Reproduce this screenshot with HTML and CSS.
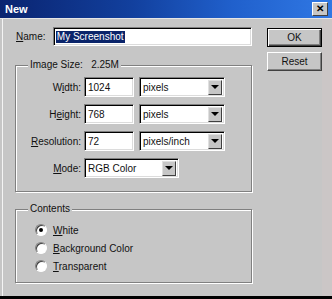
FILE: index.html
```html
<!DOCTYPE html>
<html>
<head>
<meta charset="utf-8">
<link rel="stylesheet" href="styles.css">
</head>
<body>
<div class="window">
  <div class="titlebar">
    <span class="title">New</span>
    <span class="close">&#x2715;</span>
  </div>
  <div class="body">
    <div class="left">
      <div class="name-row">
        <span class="label name-label"><u>N</u>ame:</span>
        <div class="field name-field"><span class="sel">My Screenshot</span></div>
      </div>
      <div class="group size-group">
        <span class="group-title">Image Size:&nbsp;&nbsp; 2.25M</span>
        <div class="rows">
          <div class="row">
            <span class="label row-label">W<u>i</u>dth:</span>
            <div class="field num">1024</div>
            <div class="field select unit"><span class="val">pixels</span><span class="drop"><span class="tri"></span></span></div>
          </div>
          <div class="row">
            <span class="label row-label">H<u>e</u>ight:</span>
            <div class="field num">768</div>
            <div class="field select unit"><span class="val">pixels</span><span class="drop"><span class="tri"></span></span></div>
          </div>
          <div class="row">
            <span class="label row-label"><u>R</u>esolution:</span>
            <div class="field num">72</div>
            <div class="field select unit"><span class="val">pixels/inch</span><span class="drop"><span class="tri"></span></span></div>
          </div>
          <div class="row">
            <span class="label row-label"><u>M</u>ode:</span>
            <div class="field select mode"><span class="val">RGB Color</span><span class="drop"><span class="tri"></span></span></div>
          </div>
        </div>
      </div>
      <div class="group contents-group">
        <span class="group-title">Contents</span>
        <div class="radios">
          <div class="radio-row"><span class="radio checked"></span><span class="label"><u>W</u>hite</span></div>
          <div class="radio-row"><span class="radio"></span><span class="label"><u>B</u>ackground Color</span></div>
          <div class="radio-row"><span class="radio"></span><span class="label"><u>T</u>ransparent</span></div>
        </div>
      </div>
    </div>
    <div class="buttons">
      <div class="btn default">OK</div>
      <div class="btn">Reset</div>
    </div>
  </div>
  <div class="bottombar"></div>
</div>
</body>
</html>
```

FILE: styles.css
```css
html, body {
  margin: 0;
  padding: 0;
  background: #c6c6c6;
}
.window {
  width: 332px;
  height: 299px;
  background: #c6c6c6;
  font-family: "Liberation Sans", Arial, sans-serif;
  font-size: 10px;
  color: #111;
  display: flex;
  flex-direction: column;
  overflow: hidden;
}
.titlebar {
  height: 18px;
  flex: none;
  background: linear-gradient(90deg, #0a2470 0%, #12409e 40%, #2060cc 70%, #3078e4 100%);
  display: flex;
  align-items: center;
  justify-content: space-between;
  padding: 0 4px 0 5px;
  border-bottom: 1px solid #e6e6e6;
}
.title {
  color: #fff;
  font-weight: bold;
  font-size: 11px;
}
.close {
  width: 16px;
  height: 14px;
  box-sizing: border-box;
  background: #c6c6c6;
  border: 1px solid;
  border-color: #fff #404040 #404040 #fff;
  font-size: 10px;
  font-weight: bold;
  line-height: 12px;
  text-align: center;
  color: #000;
}
.body {
  flex: 1;
  display: flex;
  padding: 8px 0 0 15px;
  box-shadow: inset 2px 0 0 #c6c6c6, inset 3px 0 0 #f4f4f4, inset -10px 0 0 #cbc6c6;
}
.left {
  width: 237px;
  display: flex;
  flex-direction: column;
}
.label {
  white-space: nowrap;
}
.name-row {
  display: flex;
  align-items: center;
  height: 19px;
}
.name-label {
  width: 37px;
  padding-left: 1px;
}
.field {
  box-sizing: border-box;
  background: #fff;
  border-top: 1px solid #808080;
  border-left: 1px solid #808080;
  border-right: 1px solid #fff;
  border-bottom: 1px solid #fff;
  box-shadow: inset 1px 1px 0 #000, inset -1px -1px 0 #dcdcdc;
  height: 20px;
  display: flex;
  align-items: center;
  padding-left: 3px;
  white-space: nowrap;
}
.name-field {
  width: 200px;
  height: 19px;
  padding-left: 2px;
}
.sel {
  background: #0a246a;
  color: #fff;
  padding: 0 1px;
  line-height: 12px;
}
.group {
  position: relative;
  border: 1px solid #808080;
  box-shadow: inset 1px 1px 0 #fff, 1px 1px 0 #fff;
  box-sizing: border-box;
}
.group-title {
  position: absolute;
  top: -7px;
  left: 12px;
  background: #c6c6c6;
  padding: 0 2px;
  line-height: 12px;
  white-space: nowrap;
}
.size-group {
  margin-top: 19px;
  height: 127px;
  padding: 11px 0 0 1px;
}
.rows {
  display: flex;
  flex-direction: column;
  gap: 7px;
}
.row {
  display: flex;
  align-items: center;
  height: 20px;
}
.row-label {
  width: 64px;
  text-align: right;
  margin-right: 3px;
}
.num {
  width: 50px;
  margin-right: 5px;
}
.select {
  justify-content: space-between;
  padding-right: 2px;
}
.unit {
  width: 86px;
}
.mode {
  width: 95px;
}
.drop {
  width: 14px;
  height: 15px;
  box-sizing: border-box;
  background: #c6c6c6;
  border: 1px solid;
  border-color: #e0e0e0 #404040 #404040 #e0e0e0;
  display: flex;
  align-items: center;
  justify-content: center;
}
.tri {
  width: 0;
  height: 0;
  border-left: 4px solid transparent;
  border-right: 4px solid transparent;
  border-top: 4px solid #000;
}
.contents-group {
  margin-top: 17px;
  height: 74px;
  padding: 14px 0 0 19px;
}
.radios {
  display: flex;
  flex-direction: column;
  gap: 6px;
}
.radio-row {
  display: flex;
  align-items: center;
  height: 12px;
  gap: 6px;
}
.radio {
  width: 12px;
  height: 12px;
  box-sizing: border-box;
  border-radius: 50%;
  background: #fff;
  border: 1px solid;
  border-color: #808080 #fff #fff #808080;
  box-shadow: inset 1px 1px 0 #404040;
  display: flex;
  align-items: center;
  justify-content: center;
}
.radio.checked::after {
  content: "";
  width: 4px;
  height: 4px;
  border-radius: 50%;
  background: #000;
}
.buttons {
  display: flex;
  flex-direction: column;
  gap: 5px;
  margin-left: 15px;
  padding-top: 1px;
}
.btn {
  width: 55px;
  height: 19px;
  box-sizing: border-box;
  border: 1px solid;
  border-color: #fff #404040 #404040 #fff;
  box-shadow: inset -1px -1px 0 #808080;
  display: flex;
  align-items: center;
  justify-content: center;
}
.btn.default {
  border: 1px solid #000;
  box-shadow: inset 1px 1px 0 #fff, inset -1px -1px 0 #404040, inset -2px -2px 0 #808080;
}
.bottombar {
  height: 3px;
  flex: none;
  background: #000;
}
```
